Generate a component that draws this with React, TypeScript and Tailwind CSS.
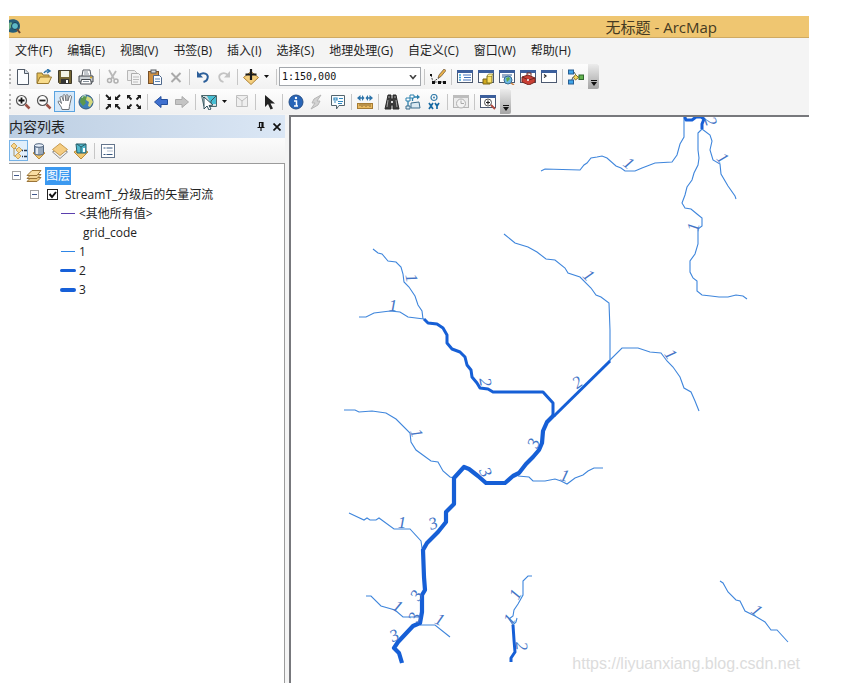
import type { ReactNode } from "react";

const UI_FONT = "font-['Open_Sans','Noto_Sans_CJK_SC',sans-serif]";

function Icon({ children, className = "size-4" }: { children: ReactNode; className?: string }) {
  return (
    <svg viewBox="0 0 16 16" className={className} fill="none" aria-hidden="true">
      {children}
    </svg>
  );
}

function WindowFrame({ muted = false }: { muted?: boolean }) {
  return (
    <>
      <rect x=".5" y="1.5" width="15" height="12" fill={muted ? "#ececec" : "#fff"} stroke={muted ? "#b5b5b5" : "#4c5970"} />
      <rect x="0" y="1" width="16" height="3" fill={muted ? "#bdbdbd" : "#3c5f9c"} />
    </>
  );
}

const icons: Record<string, ReactNode> = {
  new: (
    <Icon>
      <path d="M2.500 .5h7.500l3.500 3.500v11.500h-11z" fill="#fbfdff" stroke="#4f5966" />
      <path d="M9.500 .5v4h4" fill="#d5e0ec" stroke="#4f5966" />
    </Icon>
  ),
  open: (
    <Icon>
      <path d="M1 14V4h5l1 2h6v3" fill="#e5bf58" stroke="#8d7230" />
      <path d="M1 14.500 4 8h11.500L12.500 14.500z" fill="#f8dc8c" stroke="#99782f" />
      <path d="M8 4c1-2 3-2.500 5-2M11 0l3 2-3 2" stroke="#2d72a8" strokeWidth="1.500" />
    </Icon>
  ),
  save: (
    <Icon>
      <path d="M1.500 1.500h13v13h-12l-1-1z" fill="#756634" stroke="#403b2c" />
      <path d="M4 2h8v6H4z" fill="#f3f3e5" />
      <path d="M4 10h8v5H4z" fill="#353535" />
      <path d="M9 11h2v3H9z" fill="#fff" />
    </Icon>
  ),
  print: (
    <Icon>
      <path d="M4 7 5 1h7l1 6" fill="#fff" stroke="#555b63" />
      <path d="M1 7h14v6H1z" fill="#cdd2d6" stroke="#42474d" />
      <path d="M3.500 10.500h9l1 4.500h-11z" fill="#fff" stroke="#42474d" />
      <path d="M6 3h4M6 5h5M5 12.500h6" stroke="#87919b" />
      <path d="M12 8.500h2" stroke="#d7a823" strokeWidth="1.500" />
    </Icon>
  ),
  cut: (
    <Icon>
      <path d="m4 1 5 9M11 2 6 10" stroke="#b9b9b9" strokeWidth="1.800" />
      <circle cx="4.500" cy="11.500" r="2" stroke="#b0b0b0" strokeWidth="1.500" />
      <circle cx="11" cy="12" r="2" stroke="#b0b0b0" strokeWidth="1.500" />
    </Icon>
  ),
  copy: (
    <Icon>
      <path d="M1.500 1.500h7l2 2v8h-9z" fill="#eee" stroke="#b7b7b7" />
      <path d="M5.500 4.500h7l2 2v9h-9z" fill="#f4f4f4" stroke="#adadad" />
      <path d="M7 8h6M7 10.500h6M7 13h5" stroke="#bcbcbc" />
    </Icon>
  ),
  paste: (
    <Icon>
      <rect x="1.500" y="2.500" width="10" height="12" fill="#cf9042" stroke="#76502a" />
      <rect x="4" y="1" width="5" height="3" fill="#d9dce0" stroke="#55585c" />
      <path d="M6.500 6.500h6l2 2v7h-8z" fill="#fafcff" stroke="#4f698c" />
      <path d="M8 10h5M8 12.500h5" stroke="#5d85b4" />
    </Icon>
  ),
  remove: (
    <Icon>
      <path d="m3.500 4 9 9m0-9-9 9" stroke="#aaa" strokeWidth="2" />
    </Icon>
  ),
  undo: (
    <Icon>
      <path d="M3.500 6.500C8 2 14 5 12.500 9.500c-.5 2-2 3-4 3.500" stroke="#2c5f9a" strokeWidth="2" />
      <path d="M2 2v6.500h6z" fill="#2c5f9a" />
    </Icon>
  ),
  redo: (
    <Icon>
      <path d="M12.500 6.500C8 2 2 5 3.500 9.500c.5 2 2 3 4 3.500" stroke="#c3c3c3" strokeWidth="1.800" />
      <path d="M14 2v6.500H8z" fill="#c3c3c3" />
    </Icon>
  ),
  addData: (
    <Icon>
      <path d="m8 2.500 7.500 6L8 15.500.5 8.500z" fill="#f5cf7e" stroke="#ae8338" />
      <path d="M8 0v11M2.500 5.500h11" stroke="#1b1b1b" strokeWidth="2.200" />
    </Icon>
  ),
  editor: (
    <Icon>
      <path d="m1 6 2 7h10M3 13l7-5" stroke="#444" strokeDasharray="2 1" />
      <path d="M0 5h2v2H0zM2 12h3v3H2zM8 12h3v3H8zM13 12h3v3h-3z" fill="#111" />
      <path d="m8 9 1-3 5-6 2 1.500-5 6z" fill="#e8b04a" stroke="#685233" strokeWidth=".7" />
    </Icon>
  ),
  contents: (
    <Icon>
      <WindowFrame />
      <path d="M2 6h2M2 8.500h2M2 11h2" stroke="#3aa5da" strokeWidth="1.500" />
      <path d="M6 6h8M7 8.500h7M6 11h8" stroke="#4475bd" />
    </Icon>
  ),
  catalog: (
    <Icon>
      <WindowFrame />
      <path d="M5 10h7v5H5z" fill="#d1a91f" stroke="#7b6516" />
      <path d="M9 7h5v7H9z" fill="#ffe265" stroke="#7d711e" />
      <path d="m9 7 1.500-2H15l-1 2" fill="#fff19a" stroke="#7d711e" strokeWidth=".7" />
    </Icon>
  ),
  search: (
    <Icon>
      <WindowFrame />
      <path d="M3 6h10M3 8h6" stroke="#7692b5" strokeWidth="1.500" />
      <circle cx="9" cy="11" r="4" fill="#6cb8e4" stroke="#396b94" />
      <path d="m7 9 3-1 1 2-3 3z" fill="#63a947" />
      <path d="m12 14 3 2" stroke="#c67d3c" strokeWidth="1.500" />
    </Icon>
  ),
  toolbox: (
    <Icon>
      <WindowFrame />
      <path d="m2 8 6-2 7 3v4l-6 3-7-3z" fill="#c93e34" stroke="#782820" />
      <path d="m2 8 7 3 6-2M7 6V4h4v3" stroke="#6e2820" />
      <path d="M8 10v2" stroke="#fff" strokeWidth="1.500" />
    </Icon>
  ),
  python: (
    <Icon>
      <WindowFrame />
      <path d="m3 5.500 2 1.500-2 1.500" stroke="#222" strokeWidth="1.200" />
    </Icon>
  ),
  model: (
    <Icon>
      <path d="M4 3h2l3 5H5l-2 5M8 8h4" stroke="#4e5d65" />
      <rect x=".5" y="1" width="5" height="4" fill="#3ea3e8" stroke="#265d92" />
      <rect x=".5" y="11" width="5" height="4" fill="#3ea3e8" stroke="#265d92" />
      <path d="m7.500 5.500 3 3-3 2.500-2-2.500z" fill="#f4d95c" stroke="#8a722a" />
      <rect x="11" y="6" width="4.500" height="4.500" fill="#63b34f" stroke="#31692e" />
    </Icon>
  ),
  zoomIn: (
    <Icon>
      <circle cx="6.500" cy="6.500" r="5" fill="#fdfdfd" stroke="#565656" strokeWidth="1.200" />
      <path d="M3.500 6.500h6m-3-3v6" stroke="#111" strokeWidth="1.800" />
      <path d="m10.500 10.500 4 4" stroke="#9d5145" strokeWidth="2.500" />
    </Icon>
  ),
  zoomOut: (
    <Icon>
      <circle cx="6.500" cy="6.500" r="5" fill="#fdfdfd" stroke="#565656" strokeWidth="1.200" />
      <path d="M3.500 6.500h6" stroke="#222" strokeWidth="1.800" />
      <path d="m10.500 10.500 4 4" stroke="#9d5145" strokeWidth="2.500" />
    </Icon>
  ),
  pan: (
    <Icon>
      <path d="M5 15.500c0-3-4-6-4-8 1-1 2.500 0 3.500 2L3 4c0-2 2-2 2.300-.5L6.500 7 6 2c.2-2 2-2 2.200 0L9 7V1.500c.5-1.500 2-1.200 2 .5l-.2 5L12.500 2c1-1 2-.3 2 1L13 9.500c-.2 2-1 4-1 6z" fill="#fff" stroke="#6e7277" />
    </Icon>
  ),
  globe: (
    <Icon>
      <circle cx="8" cy="8" r="7" fill="#3e80b9" stroke="#345b7c" />
      <path d="M3 3 7 1l2 3-2 3 1 2-3 3-3-4z" fill="#5c984c" />
      <path d="m9 2 4 2 2 4-3 5-2-1 1-4-3-2z" fill="#d5d87b" />
      <path d="M4 4c0-2 3-3 4-2" stroke="#c8e4ee" />
    </Icon>
  ),
  fixedIn: (
    <Icon>
      <path d="m1 1 4 4m10-4-4 4M1 15l4-4m10 4-4-4" stroke="#1b1b1b" strokeWidth="1.800" />
      <path d="M6 2v4H2zM10 2v4h4zM6 14v-4H2zM10 14v-4h4z" fill="#1b1b1b" />
    </Icon>
  ),
  fixedOut: (
    <Icon>
      <path d="m2 2 3.500 3.500M14 2l-3.500 3.500M2 14l3.500-3.500M14 14l-3.500-3.500" stroke="#1b1b1b" strokeWidth="1.800" />
      <path d="M1 1h4L1 5zM15 1v4l-4-4zM1 15v-4l4 4zM15 15h-4l4-4z" fill="#1b1b1b" />
    </Icon>
  ),
  back: (
    <Icon>
      <path d="M1.500 8 8 2.500v3h6.500v5H8v3z" fill="#3f70cf" stroke="#244f9c" />
    </Icon>
  ),
  forward: (
    <Icon>
      <path d="M14.500 8 8 2.500v3H1.500v5H8v3z" fill="#c4c4c4" stroke="#aaa" />
    </Icon>
  ),
  selectFeatures: (
    <Icon>
      <path d="M.5 1.500h15v11H3z" fill="#d5e0e2" stroke="#4b686d" />
      <path d="M6 2h9v8h-5z" fill="#46bed3" />
      <path d="m15 2-5 5v6M1 2l5 5" stroke="#3b565c" />
      <path d="m3 3 9 8-4 .5 2 3.500-2 1-2-4-3 3z" fill="#fff" stroke="#2e4f5b" />
    </Icon>
  ),
  clearSelection: (
    <Icon>
      <path d="M2.500 1.500h11v11h-11z" fill="#efefef" stroke="#c0c0c0" />
      <path d="m3 3 5 4v6m0-6 5-4" stroke="#bdbdbd" />
    </Icon>
  ),
  pointer: (
    <Icon>
      <path d="M4 1v12l3-3 2.500 5.500 2.500-1-2.500-5H14z" fill="#222" />
    </Icon>
  ),
  identify: (
    <Icon>
      <circle cx="8" cy="8" r="7" fill="#2865b7" stroke="#264e87" />
      <path d="M6 7h2.500v4.500M6 12h4" stroke="#fff" strokeWidth="1.500" />
      <circle cx="8" cy="4" r="1.200" fill="#fff" />
    </Icon>
  ),
  hyperlink: (
    <Icon>
      <path d="m12 1-7 4-2 4h3l-4 6 7-4 2-4H8z" fill="#d2d2d2" stroke="#b6b6b6" />
    </Icon>
  ),
  popup: (
    <Icon>
      <path d="M1.500 1.500h13v10H9L6.500 15v-3.500h-5z" fill="#f9fdff" stroke="#53646d" />
      <path d="M4 4h3v2H4zM9 4.500h4M4 8h2M8 7.500h5M8 9.500h4" stroke="#3388bd" strokeWidth="1.200" />
    </Icon>
  ),
  measure: (
    <Icon>
      <rect x=".5" y="9.500" width="15" height="5" fill="#e8b960" stroke="#a57b33" />
      <path d="M3 10v2m2-2v3m2-3v2m2-2v3m2-3v2m2-2v3" stroke="#75552a" strokeWidth=".8" />
      <path d="M2 4h4M10 4h4" stroke="#2c73a9" strokeWidth="1.500" />
      <path d="M0 4 3.500 1v6zM7.500 4 5 1v6zM8.500 4 11 1v6zM16 4l-3.500-3v6z" fill="#2c73a9" />
    </Icon>
  ),
  find: (
    <Icon>
      <path d="M4 1h3v4h2V1h3l1 5 2 9H9v-4H7v4H1l2-9z" fill="#3b3b3b" stroke="#292929" />
      <path d="m4 6-1 7M12 6l1 7M5 2v2M11 2v2" stroke="#a2a2a2" />
      <path d="M7 7h2v2H7z" fill="#ddd" />
    </Icon>
  ),
  route: (
    <Icon>
      <path d="M7.500 7V3H13M3 6v8" stroke="#2b80ad" strokeWidth="1.300" />
      <path d="m12 .5 3 2.500-3 2.500z" fill="#2b80ad" />
      <path d="M1 4h4v3H1zM5 1h4v3H5z" fill="#fff" stroke="#2b80ad" />
      <path d="m6 9 8-1 1 6H6zM1 12h4v3H1z" fill="#dceaf2" stroke="#3b6d8c" />
    </Icon>
  ),
  goToXY: (
    <Icon>
      <circle cx="8" cy="3.500" r="3" stroke="#397fac" strokeWidth="1.200" />
      <circle cx="8" cy="3.500" r="1" fill="#397fac" />
      <path d="m3 9 4 6m0-6-4 6M9 9l2 3 2-3m-2 3v3" stroke="#176aa3" strokeWidth="1.700" />
    </Icon>
  ),
  time: (
    <Icon>
      <WindowFrame muted />
      <circle cx="8" cy="9.500" r="4.500" fill="#f3f3f3" stroke="#b0b0b0" />
      <path d="M8 6.500v3h3" stroke="#aaa" />
    </Icon>
  ),
  viewer: (
    <Icon>
      <WindowFrame />
      <circle cx="8" cy="8.500" r="3.500" fill="#fff" stroke="#555" />
      <path d="M6 8.500h4m-2-2v4" stroke="#222" strokeWidth="1.200" />
      <path d="m11 11 4 4" stroke="#ad4940" strokeWidth="2" />
    </Icon>
  ),
};

function ToolButton({ name, label, active = false }: { name: string; label: string; active?: boolean }) {
  return (
    <button
      type="button"
      aria-label={label}
      aria-pressed={active || undefined}
      className={
        active
          ? "flex h-[21px] w-[21px] shrink-0 items-center justify-center border border-[#5aa3e0] bg-[#d5e8f9]"
          : "flex h-[21px] w-[21px] shrink-0 items-center justify-center"
      }
    >
      {icons[name]}
    </button>
  );
}

function Separator() {
  return (
    <span className="flex w-[6px] shrink-0 justify-center">
      <span className="h-4 w-px bg-[#c6c6c6]" />
    </span>
  );
}

function Grip() {
  return <span className="h-[15px] w-[3px] shrink-0 border-l-2 border-dotted border-[#b4b4b4]" />;
}

function Caret({ label }: { label: string }) {
  return (
    <button type="button" aria-label={label} className="flex h-[21px] w-3 shrink-0 items-center pl-[3px]">
      <svg viewBox="0 0 5 3" className="h-[3px] w-[5px]" aria-hidden="true">
        <path d="M0 0h5L2.500 3z" fill="#111" />
      </svg>
    </button>
  );
}

function Overflow() {
  return (
    <button
      type="button"
      aria-label="工具栏选项"
      className="ml-[2px] flex h-full w-[11px] shrink-0 items-end justify-center rounded-r-xs bg-linear-to-b from-[#ececec] to-[#a5a5a5] pb-[3px]"
    >
      <svg viewBox="0 0 6 6" className="size-[6px]" aria-hidden="true">
        <path d="M0 0h6v1H0zM0 2h6L3 6z" fill="#111" />
      </svg>
    </button>
  );
}

type Tool = [string, string] | "sep";

function Tools({ items }: { items: Tool[] }) {
  return (
    <>
      {items.map((t, i) =>
        t === "sep" ? <Separator key={i} /> : <ToolButton key={i} name={t[0]} label={t[1]} active={t[0] === "pan"} />,
      )}
    </>
  );
}

const menus = ["文件(F)", "编辑(E)", "视图(V)", "书签(B)", "插入(I)", "选择(S)", "地理处理(G)", "自定义(C)", "窗口(W)", "帮助(H)"];

function Header() {
  return (
    <header className="pb-px">
      <div className="flex h-[22px] items-center justify-between border-b border-[#cfaa62] bg-[#efc671] pr-[92px]">
        <svg viewBox="0 0 12 16" className="h-4 w-3" fill="none" aria-hidden="true">
          <path d="M0 1c6-2 11 1 11 6s-4 8-11 6z" fill="#255e79" />
          <path d="M0 4c3-2 4 1 3 3l-3 4z" fill="#6caf83" />
          <circle cx="6" cy="7" r="3.500" fill="#5cb9c6" stroke="#173d56" />
          <path d="m8 10 3 4" stroke="#6d4731" strokeWidth="2" />
        </svg>
        <h1 className="text-[15px] leading-5 text-[#453a22]">无标题 - ArcMap</h1>
      </div>
      <nav aria-label="主菜单" className="flex h-[26px] items-center gap-[15px] pl-[6px] text-[12px] leading-4 text-[#222]">
        {menus.map((m) => (
          <button key={m} type="button" className="shrink-0 whitespace-nowrap">
            {m}
          </button>
        ))}
      </nav>
      <div className="flex h-[25px] w-fit items-center bg-linear-to-b from-[#fdfdfd] to-[#f1f1f1]">
        <Grip />
        <Tools
          items={[
            ["new", "新建"], ["open", "打开"], ["save", "保存"], ["print", "打印"], "sep",
            ["cut", "剪切"], ["copy", "复制"], ["paste", "粘贴"], ["remove", "删除"], "sep",
            ["undo", "撤消"], ["redo", "恢复"], "sep", ["addData", "添加数据"],
          ]}
        />
        <Caret label="添加数据选项" />
        <Separator />
        <div className="relative h-[19px] w-[142px] shrink-0">
          <select
            aria-label="地图比例"
            className="block h-full w-full appearance-none border border-[#a3a7ac] bg-white pl-[2px] font-['DejaVu_Sans_Mono',monospace] text-[10px] text-[#111]"
          >
            <option>1:150,000</option>
          </select>
          <svg viewBox="0 0 8 5" className="pointer-events-none absolute top-[8px] right-1 h-[5px] w-2" fill="none" aria-hidden="true">
            <path d="m1 0 3 3.500L7 0" stroke="#444" strokeWidth="1.600" />
          </svg>
        </div>
        <Tools
          items={[
            "sep", ["editor", "编辑器工具条"], "sep",
            ["contents", "内容列表"], ["catalog", "目录"], ["search", "搜索"], ["toolbox", "工具箱"], ["python", "Python"], "sep",
            ["model", "模型构建器"],
          ]}
        />
        <Overflow />
      </div>
      <div className="flex h-[25px] w-fit items-center bg-linear-to-b from-[#fdfdfd] to-[#f1f1f1]">
        <Grip />
        <Tools
          items={[
            ["zoomIn", "放大"], ["zoomOut", "缩小"], ["pan", "平移"], ["globe", "全图"], "sep",
            ["fixedIn", "固定比例放大"], ["fixedOut", "固定比例缩小"], "sep",
            ["back", "返回"], ["forward", "前进"], "sep", ["selectFeatures", "选择要素"],
          ]}
        />
        <Caret label="选择要素选项" />
        <Tools
          items={[
            ["clearSelection", "清除所选要素"], "sep", ["pointer", "选择元素"], "sep",
            ["identify", "识别"], ["hyperlink", "超链接"], ["popup", "HTML 弹出窗口"], "sep",
            ["measure", "测量"], "sep", ["find", "查找"], ["route", "查找路径"], ["goToXY", "转到 XY"], "sep",
            ["time", "时间滑块"], "sep", ["viewer", "查看器窗口"],
          ]}
        />
        <Overflow />
      </div>
    </header>
  );
}

function Expander() {
  return (
    <button type="button" aria-label="折叠" className="flex size-[9px] shrink-0 items-center justify-center border border-[#a3a3a3] bg-white">
      <span className="h-px w-[5px] bg-[#40588c]" />
    </button>
  );
}

function ContentsPanel() {
  return (
    <aside className="flex w-[276px] shrink-0 flex-col">
      <div className="flex h-[23px] items-center bg-linear-to-r from-[#bccee2] to-[#dbe7f5]">
        <h2 className="grow text-[14px] leading-5 text-[#222]">内容列表</h2>
        <button type="button" aria-label="自动隐藏" className="flex size-4 items-center justify-center">
          <svg viewBox="0 0 8 9" className="h-[9px] w-2" fill="none" aria-hidden="true">
            <path d="M2 .5h4V5M2.500 0v5M.5 5.500h7M4 6v3M5 1v4" stroke="#111" strokeWidth="1.200" />
          </svg>
        </button>
        <button type="button" aria-label="关闭" className="flex size-4 items-center justify-center">
          <svg viewBox="0 0 8 8" className="size-2" fill="none" aria-hidden="true">
            <path d="m.5.5 7 7m0-7-7 7" stroke="#111" strokeWidth="1.700" />
          </svg>
        </button>
      </div>
      <div className="flex h-[25px] items-center bg-linear-to-b from-[#fbfbfb] to-[#f1f1f1]">
        <button type="button" aria-label="按绘制顺序列出" className="flex h-[21px] w-[19px] items-center justify-center border border-[#76b2e6] bg-[#e1effb]">
          <Icon>
            <path d="M3 5v8h4M4 5l5 4" stroke="#ad925a" />
            <path d="m3 0 3 3-3 3-3-3zM8 4l3 3-3 3-3-3zM7 10l3 3-3 3-3-3z" fill="#f8d68b" stroke="#c39544" strokeWidth=".8" />
            <path d="M11 7.500h1m1 0h3M11 13.500h1m1 0h3" stroke="#23354a" strokeWidth="1.300" />
          </Icon>
        </button>
        <button type="button" aria-label="按源列出" className="flex size-[21px] items-center justify-center">
          <Icon>
            <path d="m2 10 6-3 6 3-6 6z" fill="#f0c66c" stroke="#bd8c3b" />
            <path d="M3.500 2.500v8c1 2 8 2 9 0v-8z" fill="#98a9bd" stroke="#4e627c" />
            <ellipse cx="8" cy="2.500" rx="4.500" ry="1.800" fill="#e8f0fa" stroke="#4e627c" />
            <path d="M6 5v6" stroke="#e4ecf6" strokeWidth="2" />
          </Icon>
        </button>
        <button type="button" aria-label="按可见性列出" className="flex size-[21px] items-center justify-center">
          <Icon>
            <path d="m.5 9 7.500 6.500L15.500 9 8 5z" fill="#eee" stroke="#8f8f8f" />
            <path d="m.5 6.500 7.500-6 7.500 6-7.500 6z" fill="#f5cd82" stroke="#c59a50" />
          </Icon>
        </button>
        <button type="button" aria-label="按选择列出" className="flex size-[21px] items-center justify-center">
          <Icon>
            <path d="m1 9 7-4 7 4-7 7z" fill="#f0c66c" stroke="#bd8c3b" />
            <path d="M3 1h10v9H4z" fill="#51b8cd" stroke="#275d68" />
            <path d="m4 1 4 3v6m0-6 5-3" stroke="#275d68" />
            <path d="M10 5h2v4h-2z" fill="#fff" />
          </Icon>
        </button>
        <Separator />
        <button type="button" aria-label="选项" className="flex size-[21px] items-center justify-center">
          <Icon>
            <rect x="1.500" y="1.500" width="13" height="13" fill="#fff" stroke="#65768d" />
            <path d="M3.500 5h2m1 0h6M3.500 11.500h2m1 0h6" stroke="#35577f" strokeWidth="1.200" />
            <path d="M7 8h6" stroke="#b7c1cf" />
          </Icon>
        </button>
      </div>
      <ul className="grow border-t border-r border-[#9b9b9b] bg-white pt-[2px] text-[12px] leading-[19px] text-[#222]">
        <li>
          <div className="flex h-[19px] items-center pl-[3px]">
            <Expander />
            <svg viewBox="0 0 16 14" className="ml-[5px] h-[14px] w-4" fill="none" aria-hidden="true">
              <path d="m1 12.500 4-4h10l-4 4z" fill="#edc981" stroke="#9a7438" />
              <path d="m1 9.500 4-4h10l-4 4z" fill="#f2d397" stroke="#9a7438" />
              <path d="m1 6.500 5-5h9l-4 5z" fill="#f9dda3" stroke="#9a7438" />
            </svg>
            <span className="ml-[3px] h-[18px] bg-[#3c99f0] px-[1px] leading-[18px] text-white">图层</span>
          </div>
          <ul>
            <li>
              <div className="flex h-[19px] items-center pl-[21px]">
                <Expander />
                <label className="ml-2 flex items-center gap-[7px]">
                  <span className="grid size-[11px]">
                    <input type="checkbox" defaultChecked className="peer col-start-1 row-start-1 size-[11px] appearance-none border border-[#222] bg-white" />
                    <svg viewBox="0 0 11 11" className="pointer-events-none col-start-1 row-start-1 hidden size-[11px] peer-checked:block" fill="none" aria-hidden="true">
                      <path d="m2.500 5 2.500 3 4-5" stroke="#111" strokeWidth="2" />
                    </svg>
                  </span>
                  StreamT_分级后的矢量河流
                </label>
              </div>
              <ul>
                <LegendRow label="<其他所有值>" line="h-px w-[14px] bg-[#5b3fae]" />
                <li className="h-[19px] pl-[74px]">grid_code</li>
                <LegendRow label="1" line="h-px w-[14px] bg-[#2f86e6]" />
                <LegendRow label="2" line="h-[3px] w-4 rounded-full bg-[#1760d8]" />
                <LegendRow label="3" line="h-1 w-4 rounded-full bg-[#1760d8]" />
              </ul>
            </li>
          </ul>
        </li>
      </ul>
    </aside>
  );
}

function LegendRow({ label, line }: { label: string; line: string }) {
  return (
    <li className="flex h-[19px] items-center gap-[3px] pl-[51px]">
      <span className="flex w-4 justify-center">
        <span className={line} />
      </span>
      {label}
    </li>
  );
}

const order1 = [
  "541,171 545,169 580,170 584,165 587,163 591,158 597,157 602,156 607,158 616,166 621,168 625,171 635,171 642,168 655,163 672,162 677,155 680,144 684,137 684,118",
  "702,129 698,133 698,150 699,158 698,165 694,173 692,180 687,187 685,195 682,203 685,208 691,209 697,214 702,218 702,226 698,229 698,244 695,254 690,261 690,272 693,278 697,281 697,291 702,295 711,296 719,297 728,297 736,295 743,296 747,299",
  "702,129 710,135 712,141 710,150 713,160 720,164 721,174 728,186 735,196 736,199",
  "504,234 515,243 528,247 537,252 546,259 555,260 565,268 568,273 580,277 591,288 596,295 601,297 609,303 610,330 610,361",
  "373,249 378,253 382,254 388,261 396,262 401,267 403,274 404,282 409,287 415,296 418,305 422,311 423,319",
  "359,317 366,317 374,313 390,311 400,312 408,317 424,319",
  "609,361 622,348 638,348 650,352 661,353 667,361 673,367 680,377 684,388 691,392 695,401 699,411",
  "344,410 355,410 359,412 372,411 386,413 396,419 410,433 411,442 416,450 431,461 438,462 443,471 450,477 454,478",
  "518,476 529,477 533,481 545,481 555,479 561,481 567,484 575,478 583,475 588,471 594,468 603,468",
  "349,513 364,520 367,518 370,520 376,520 379,518 394,529 410,529 421,541 422,548",
  "366,596 371,596 381,606 395,610 403,617 420,617",
  "420,625 435,625 450,637",
  "532,576 528,576 523,581 523,595 518,604 514,610 513,616 509,619 513,625",
  "517,618 516,622 513,625",
  "720,581 723,583 728,592 736,600 740,601 745,611 755,616 765,622 771,630 777,630 788,642",
];

const order2 = [
  "424,319 428,323 437,324 443,328 447,335 447,343 452,349 460,352 465,357 467,365 471,370 472,377 477,383 480,388 488,389 493,392 543,392 553,403 553,416",
  "610,361 554,416",
  "684,115 686,120 692,120 696,117 701,117 704,119 702,124 702,129",
  "513,625 514,640 515,652 511,658 511,662",
];

const order3 =
  "554,415 547,422 543,431 542,443 539,450 533,457 526,464 519,473 513,476 505,483 486,483 478,476 469,469 464,467 454,478 454,504 446,512 446,522 438,532 427,543 423,550 424,577 425,590 422,595 422,612 420,623 413,626 398,642 394,648 399,653 402,663";

// x, y, rotation and stream order of every label
const labels: [number, number, number, string][] = [
  [412, 278, 78, "1"], [393, 305, 0, "1"], [629, 163, 38, "1"], [711, 121, 70, "2"], [723, 158, 50, "1"],
  [693, 227, -82, "1"], [589, 275, 45, "1"], [486, 382, 80, "2"], [417, 433, 72, "1"], [533, 443, -70, "3"],
  [486, 472, 65, "3"], [565, 475, 15, "1"], [577, 382, -35, "2"], [671, 354, 55, "1"], [402, 522, 0, "1"],
  [433, 523, -20, "3"], [416, 595, -60, "3"], [398, 606, 30, "1"], [414, 617, -70, "3"], [440, 619, 25, "1"],
  [394, 635, -25, "3"], [515, 594, -60, "1"], [509, 619, -55, "1"], [522, 646, 85, "2"], [757, 610, 40, "1"],
];

function MapView() {
  return (
    <main className="relative min-w-0 grow overflow-hidden border-t-2 border-l-2 border-[#77787c] bg-white">
      <svg viewBox="291 117 518 566" className="h-auto w-full" fill="none" role="img" aria-label="河流分级图">
        <g stroke="#3f86dc" strokeWidth="1.1">
          {order1.map((p) => (
            <polyline key={p} points={p} />
          ))}
        </g>
        <g stroke="#165fd6" strokeWidth="3" strokeLinejoin="round">
          {order2.map((p) => (
            <polyline key={p} points={p} />
          ))}
        </g>
        <polyline points={order3} stroke="#165fd6" strokeWidth="4.200" strokeLinejoin="round" />
        <g fill="#4474c6" fontSize="17" fontStyle="italic" fontFamily="'Liberation Serif', serif" textAnchor="middle">
          {labels.map(([x, y, r, t], i) => (
            <text key={i} transform={`translate(${x} ${y}) rotate(${r})`} y="6">
              {t}
            </text>
          ))}
        </g>
      </svg>
      <p className="absolute right-[9px] bottom-[9px] font-['Liberation_Sans',Arial,sans-serif] text-[16px] leading-5 text-[#dcdcdc]">
        https://liyuanxiang.blog.csdn.net
      </p>
    </main>
  );
}

export default function App() {
  return (
    <div className={`flex h-screen flex-col bg-white pt-4 pr-[42px] pb-[6px] pl-[9px] ${UI_FONT}`}>
      <div className="flex min-h-0 grow flex-col overflow-hidden bg-[#f4f4f4]">
        <Header />
        <div className="flex min-h-0 grow gap-1">
          <ContentsPanel />
          <MapView />
        </div>
      </div>
    </div>
  );
}
